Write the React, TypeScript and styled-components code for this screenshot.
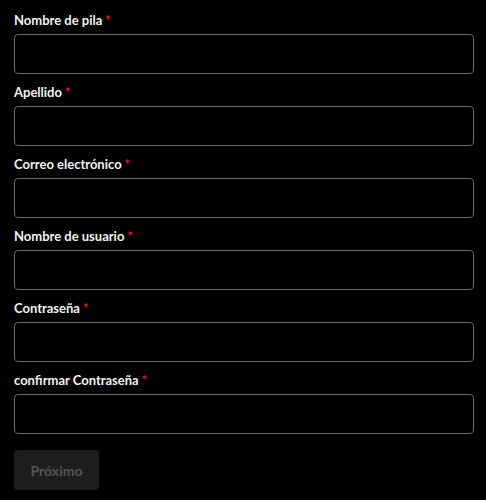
import React from "react";
import styled, { createGlobalStyle } from "styled-components";

const Global = createGlobalStyle`
  html, body { margin: 0; padding: 0; background: #000; }
  body { font-family: Lato, "Noto Sans", sans-serif; color: #fff; }
  * { box-sizing: border-box; }
`;

const Form = styled.form`
  display: flex;
  flex-direction: column;
  padding: 13px 12px 0 14px;
  width: 486px;
`;

const Field = styled.div`
  display: flex;
  flex-direction: column;
  gap: 7px;
  margin-bottom: 11px;
`;

const Label = styled.label`
  font-size: 13px;
  font-weight: 700;
  line-height: 14px;
  color: #f2f2f2;
`;

const Star = styled.span`
  color: #e01e1e;
  margin-left: 3px;
`;

const Input = styled.input`
  width: 460px;
  height: 40px;
  background: #000;
  border: 1px solid #6a6a6a;
  border-radius: 4px;
  color: #fff;
  font-size: 14px;
  padding: 0 12px;
  outline: none;
`;

const Button = styled.button`
  margin-top: 5px;
  width: 85px;
  height: 40px;
  border: none;
  border-radius: 4px;
  background: #1e1e1e;
  color: #555;
  font-family: Lato, "Noto Sans", sans-serif;
  font-size: 14px;
  font-weight: 700;
  padding: 0;
`;

const fields = [
  "Nombre de pila",
  "Apellido",
  "Correo electrónico",
  "Nombre de usuario",
  "Contraseña",
  "confirmar Contraseña",
];

export default function App() {
  return (
    <>
      <Global />
      <Form onSubmit={(e) => e.preventDefault()}>
        {fields.map((f) => (
          <Field key={f}>
            <Label>
              {f}
              <Star>*</Star>
            </Label>
            <Input type={f.includes("Contraseña") ? "password" : "text"} />
          </Field>
        ))}
        <Button type="button" disabled>
          Próximo
        </Button>
      </Form>
    </>
  );
}
